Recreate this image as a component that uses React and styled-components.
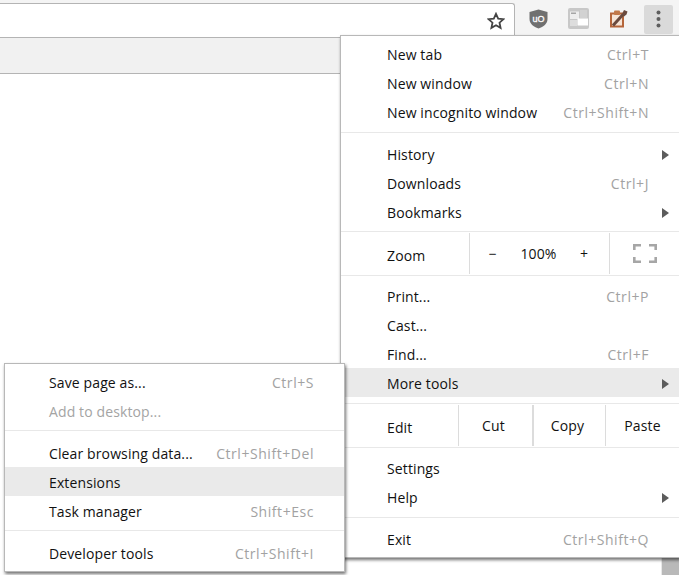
import React from 'react';
import styled, { createGlobalStyle } from 'styled-components';

const GlobalStyle = createGlobalStyle`
  html, body {
    margin: 0;
    padding: 0;
    background: #fff;
  }
`;

const Window = styled.div`
  position: relative;
  width: 679px;
  height: 575px;
  overflow: hidden;
  display: flex;
  flex-direction: column;
  background: #fff;
  font-family: 'Open Sans', 'Noto Sans', sans-serif;
  font-size: 14px;
  letter-spacing: 0.12px;
  color: #111;
`;

const Toolbar = styled.div`
  height: 37px;
  flex: none;
  display: flex;
  background: #f4f4f4;
  border-bottom: 1px solid #b4b4b4;
`;

const Omnibox = styled.div`
  width: 515px;
  margin-top: 3px;
  display: flex;
  align-items: center;
  justify-content: flex-end;
  padding-right: 9px;
  box-sizing: border-box;
  background: #fff;
  border-top: 1px solid #b4b4b4;
  border-right: 1px solid #b4b4b4;
  border-top-right-radius: 3px;
`;

const Actions = styled.div`
  display: flex;
  padding-left: 3px;
`;

const ActionSlot = styled.div`
  width: 40px;
  height: 37px;
  display: flex;
  align-items: center;
  justify-content: center;
`;

const MenuButton = styled.div`
  width: 29px;
  height: 29px;
  margin-top: 1px;
  display: flex;
  align-items: center;
  justify-content: center;
  background: #dadada;
  border-radius: 2px;
`;

const BookmarkBar = styled.div`
  height: 35px;
  flex: none;
  background: #f1f1f1;
  border-bottom: 1px solid #b4b4b4;
`;

const Viewport = styled.div`
  flex: 1;
  display: flex;
  justify-content: flex-end;
`;

const ScrollTrack = styled.div`
  width: 18px;
  border-left: 1px solid #e8e8e8;
  padding-top: 483px;
  box-sizing: border-box;
`;

const ScrollThumb = styled.div`
  height: 40px;
  background: #b9b9b9;
`;

const Menu = styled.div`
  position: absolute;
  left: ${(p) => p.$left}px;
  top: ${(p) => p.$top}px;
  width: ${(p) => p.$width}px;
  height: ${(p) => p.$height}px;
  box-sizing: border-box;
  padding-top: 3px;
  background: #fff;
  border: 1px solid #b8b8b8;
  box-shadow: 1px 2px 3px rgba(0, 0, 0, 0.55);
`;

const Row = styled.div`
  height: 29px;
  display: flex;
  align-items: center;
  padding: 2px 9px 0 ${(p) => p.$indent}px;
  box-sizing: border-box;
  background: ${(p) => (p.$active ? '#eaeaea' : 'transparent')};
  color: ${(p) => (p.$disabled ? '#a4a4a4' : 'inherit')};
`;

const Shortcut = styled.span`
  margin-left: auto;
  margin-right: 21px;
  letter-spacing: 0.55px;
  color: #a2a2a2;
`;

const Arrow = styled.span`
  margin-left: auto;
  width: 0;
  height: 0;
  margin-right: 1px;
  border-left: 7px solid #5c5c5c;
  border-top: 5px solid transparent;
  border-bottom: 5px solid transparent;
`;

const Separator = styled.div`
  height: 1px;
  margin: ${(p) => p.$above}px 0 ${(p) => p.$below}px;
  background: #e8e8e8;
`;

const ControlRow = styled.div`
  height: 43px;
  display: flex;
  align-items: stretch;
  padding: 1px 0;
  box-sizing: border-box;
`;

const ControlLabel = styled.div`
  width: ${(p) => p.$width}px;
  flex: none;
  box-sizing: border-box;
  padding: 3px 0 0 46px;
  display: flex;
  align-items: center;
`;

const ControlCell = styled.div`
  width: ${(p) => p.$width}px;
  flex: none;
  display: flex;
  align-items: center;
  justify-content: center;
  box-sizing: border-box;
  padding: 0 ${(p) => p.$inset || 0}px 1px 0;
  border-left: ${(p) => (p.$thick ? 2 : 1)}px solid #dcdcdc;
`;

const ZoomStep = styled.span`
  width: 46px;
  text-align: center;
`;

const Star = () => (
  <svg width="18" height="18" viewBox="0 0 18 18">
    <path
      d="M9 1.800l2.200 4.800 5.200.6-3.900 3.500 1.100 5.200L9 13.300l-4.600 2.600 1.100-5.200-3.900-3.500 5.200-.6z"
      fill="none"
      stroke="#444"
      strokeWidth="1.800"
    />
  </svg>
);

const ShieldIcon = () => (
  <svg width="19" height="20" viewBox="0 0 19 20">
    <path d="M9.500 0.500L18.500 3v7c0 4.500-4 8-9 9.500C4.500 18 .5 14.500 .5 10V3z" fill="#707070" />
    <text x="9.500" y="12.800" textAnchor="middle" fontFamily="'Liberation Sans', sans-serif" fontSize="9" fontWeight="400" stroke="#fff" strokeWidth="0.300" fill="#fff" letterSpacing="0">
      uO
    </text>
  </svg>
);

const TabsIcon = () => (
  <svg width="21" height="21" viewBox="0 0 21 21">
    <rect width="21" height="21" rx="2" fill="#c8c8c8" />
    <rect x="2" y="3.500" width="9" height="7.500" fill="#eeeeee" />
    <rect x="3" y="4.500" width="5" height="1.500" fill="#a6a6a6" />
    <rect x="2" y="12" width="7" height="6" fill="#dddddd" />
    <rect x="12" y="2" width="7" height="8" fill="#d2d2d2" />
    <rect x="9.500" y="10.500" width="10.500" height="7" fill="#ffffff" />
  </svg>
);

const ClipboardIcon = () => (
  <svg width="19" height="19" viewBox="0 0 19 19">
    <path d="M3 4.500h11v13H2v-13z" fill="#f6e4d6" stroke="#b5653a" strokeWidth="2" />
    <rect x="5" y="1.500" width="6" height="4.500" rx="1" fill="#c27848" />
    <path d="M4 16.500L14 5.500" stroke="#6a4a3e" strokeWidth="3" />
    <path d="M12.500 6l2.500-5 3.500 1.500-1 3-2.500 2z" fill="#6a4a3e" />
  </svg>
);

const DotsIcon = () => (
  <svg width="5" height="18" viewBox="0 0 5 18">
    <circle cx="2.500" cy="2.500" r="2" fill="#5e5e5e" />
    <circle cx="2.500" cy="9" r="2" fill="#5e5e5e" />
    <circle cx="2.500" cy="15.500" r="2" fill="#5e5e5e" />
  </svg>
);

const FullscreenIcon = () => (
  <svg width="24" height="19" viewBox="0 0 24 19">
    <path
      d="M1.300 6V1.300H8M16 1.300h6.700V6M22.700 13v4.700H16M8 17.700H1.300V13"
      fill="none"
      stroke="#a6a6a6"
      strokeWidth="2.600"
    />
  </svg>
);

const App = () => (
  <>
    <GlobalStyle />
    <Window>
      <Toolbar>
        <Omnibox>
          <Star />
        </Omnibox>
        <Actions>
          <ActionSlot><ShieldIcon /></ActionSlot>
          <ActionSlot><TabsIcon /></ActionSlot>
          <ActionSlot><ClipboardIcon /></ActionSlot>
          <ActionSlot>
            <MenuButton><DotsIcon /></MenuButton>
          </ActionSlot>
        </Actions>
      </Toolbar>
      <BookmarkBar />
      <Viewport>
        <ScrollTrack>
          <ScrollThumb />
        </ScrollTrack>
      </Viewport>

      <Menu $left={340} $top={35} $width={340} $height={523}>
        <Row $indent={46}>New tab<Shortcut>Ctrl+T</Shortcut></Row>
        <Row $indent={46}>New window<Shortcut>Ctrl+N</Shortcut></Row>
        <Row $indent={46}>New incognito window<Shortcut>Ctrl+Shift+N</Shortcut></Row>
        <Separator $above={6} $below={6} />
        <Row $indent={46}>History<Arrow /></Row>
        <Row $indent={46}>Downloads<Shortcut>Ctrl+J</Shortcut></Row>
        <Row $indent={46}>Bookmarks<Arrow /></Row>
        <Separator $above={5} $below={0} />
        <ControlRow>
          <ControlLabel $width={128}>Zoom</ControlLabel>
          <ControlCell $width={140} $inset={2}>
            <ZoomStep>−</ZoomStep>
            <ZoomStep>100%</ZoomStep>
            <ZoomStep>+</ZoomStep>
          </ControlCell>
          <ControlCell $width={70}><FullscreenIcon /></ControlCell>
        </ControlRow>
        <Separator $above={0} $below={5} />
        <Row $indent={46}>Print...<Shortcut>Ctrl+P</Shortcut></Row>
        <Row $indent={46}>Cast...</Row>
        <Row $indent={46}>Find...<Shortcut>Ctrl+F</Shortcut></Row>
        <Row $indent={46} $active>More tools<Arrow /></Row>
        <Separator $above={6} $below={0} />
        <ControlRow>
          <ControlLabel $width={117}>Edit</ControlLabel>
          <ControlCell $width={74} $inset={4}>Cut</ControlCell>
          <ControlCell $width={73} $inset={4} $thick>Copy</ControlCell>
          <ControlCell $width={74}>Paste</ControlCell>
        </ControlRow>
        <Separator $above={0} $below={5} />
        <Row $indent={46}>Settings</Row>
        <Row $indent={46}>Help<Arrow /></Row>
        <Separator $above={6} $below={6} />
        <Row $indent={46}>Exit<Shortcut>Ctrl+Shift+Q</Shortcut></Row>
      </Menu>

      <Menu $left={4} $top={363} $width={341} $height={209}>
        <Row $indent={44}>Save page as...<Shortcut>Ctrl+S</Shortcut></Row>
        <Row $indent={44} $disabled>Add to desktop...</Row>
        <Separator $above={5} $below={7} />
        <Row $indent={44}>Clear browsing data...<Shortcut>Ctrl+Shift+Del</Shortcut></Row>
        <Row $indent={44} $active>Extensions</Row>
        <Row $indent={44}>Task manager<Shortcut>Shift+Esc</Shortcut></Row>
        <Separator $above={5} $below={7} />
        <Row $indent={44}>Developer tools<Shortcut>Ctrl+Shift+I</Shortcut></Row>
      </Menu>
    </Window>
  </>
);

export default App;
